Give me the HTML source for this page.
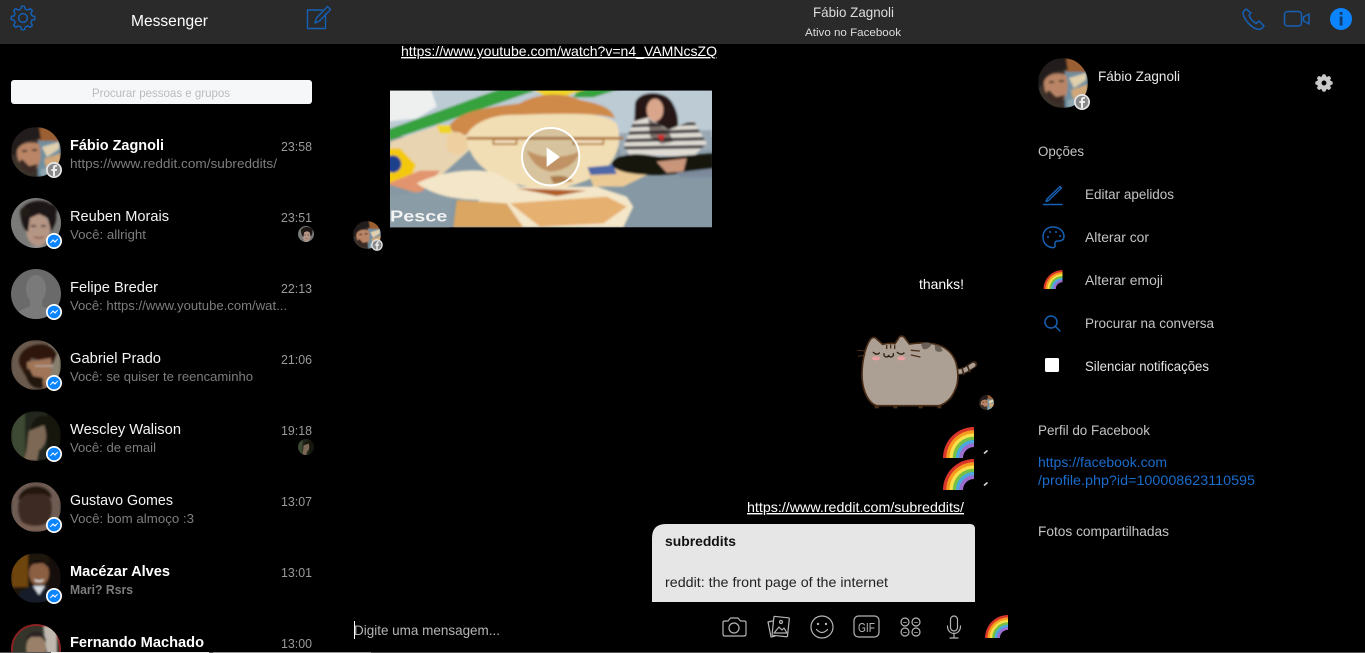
<!DOCTYPE html>
<html lang="pt"><head><meta charset="utf-8"><title>Messenger</title>
<style>
html,body{margin:0;padding:0;background:#000;width:1365px;height:653px;overflow:hidden}
svg{display:block}
text{font-family:"Liberation Sans",sans-serif;font-size:14px;fill:#fff}
.n{font-size:15px;fill:#f4f4f4}
.b{font-size:15px;font-weight:bold;fill:#fff}
.s{font-size:13px;fill:#7d7d7d}
.t{font-size:13px;fill:#9a9a9a}
.o{font-size:13.5px;fill:#c4c4c4}
.l{font-size:13.5px;fill:#1a6ccb}
.i{fill:none;stroke:#1660b4;stroke-width:1.5;stroke-linejoin:round;stroke-linecap:round}
.g{fill:none;stroke:#b5b5b5;stroke-width:1.2;stroke-linejoin:round;stroke-linecap:round}
</style></head><body>
<svg width="1365" height="653" viewBox="0 0 1365 653" xmlns="http://www.w3.org/2000/svg">
<defs>
<clipPath id="c"><circle cx="25" cy="25" r="25"/></clipPath>
<filter id="bl" x="-10%" y="-10%" width="120%" height="120%"><feGaussianBlur stdDeviation="1"/></filter>
<filter id="bv" x="-5%" y="-5%" width="110%" height="110%"><feGaussianBlur stdDeviation="3.5"/></filter>
<clipPath id="vc"><rect x="150" y="152" width="966" height="410"/></clipPath>
<clipPath id="shirt"><path d="M850 320L880 245L925 232L985 270L1060 240L1100 310L1060 350L870 345Z"/></clipPath>

<symbol id="fabio" viewBox="0 0 50 50"><g clip-path="url(#c)"><g filter="url(#bl)"><rect width="50" height="50" fill="#3a302c"/><rect x="27" y="10" width="23" height="40" fill="#6f8fa0"/><path d="M22 0H50V14H28Z" fill="#9a5f30"/><path d="M31 20L48 15V22L36 30Z" fill="#e0d0ae"/><path d="M33 32L50 26V38L36 44Z" fill="#d0a878"/><path d="M30 42L50 38V50H30Z" fill="#90a8b0"/><path d="M0 0H28L30 12L14 14L5 26L0 30Z" fill="#241e1c"/><path d="M6 24C8 16 20 14 28 17C31 26 30 38 24 43C14 47 6 38 6 24Z" fill="#b98566"/><path d="M8 35C11 44 18 47 24 44L27 37L18 39L11 32Z" fill="#3a2c26"/><path d="M11 24H16M21 23H26" stroke="#2c1e18" stroke-width="1.800"/></g></g></symbol>

<symbol id="reuben" viewBox="0 0 50 50"><g clip-path="url(#c)"><rect width="50" height="50" fill="#7a7a78"/><g filter="url(#bl)"><ellipse cx="27" cy="32" rx="12" ry="16" fill="#b59584"/><path d="M18 48H36V50H18Z" fill="#999"/><path d="M10 20C7 8 20 2 30 3C42 3 48 14 44 26L40 34L37 20L28 16L19 20L17 34C13 32 11 26 10 20Z" fill="#1e1815"/><circle cx="14" cy="14" r="5" fill="#231c18"/><circle cx="40" cy="12" r="6" fill="#1e1815"/><path d="M20 28H25M30 28H35" stroke="#2a1c18" stroke-width="1.500"/><path d="M23 39Q28 41 33 39" stroke="#8a5a50" stroke-width="1.500" fill="none"/></g></g></symbol>

<symbol id="felipe" viewBox="0 0 50 50"><g clip-path="url(#c)"><rect width="50" height="50" fill="#6a6a6a"/><ellipse cx="25" cy="20" rx="10" ry="14" fill="#7a7a7a"/><path d="M19 30H31V37L46 44V50H4V44L19 37Z" fill="#7a7a7a"/></g></symbol>

<symbol id="gabriel" viewBox="0 0 50 50"><g clip-path="url(#c)"><g filter="url(#bl)"><rect width="50" height="50" fill="#6a5a4e"/><rect x="38" width="12" height="50" fill="#8a8070"/><path d="M8 24C4 4 40 -4 46 14L42 24L20 18L14 36Z" fill="#2e1510"/><path d="M16 22L40 18C42 30 40 44 28 46C20 46 16 36 16 22Z" fill="#a07458"/><path d="M14 32C16 46 24 50 32 48L32 38L22 36L18 28Z" fill="#24140e"/><path d="M24 26H42" stroke="#cfcfcf" stroke-width=".8"/><path d="M32 44L42 40V50H34Z" fill="#8a6250"/></g></g></symbol>

<symbol id="wescley" viewBox="0 0 50 50"><g clip-path="url(#c)"><g filter="url(#bl)"><rect width="50" height="50" fill="#22281a"/><rect width="14" height="50" fill="#3e4830"/><rect x="36" width="14" height="50" fill="#14140e"/><path d="M20 20C20 4 36 0 42 12L38 24L28 16Z" fill="#17120e"/><path d="M18 20L33 14C37 24 35 36 28 39L26 50L12 50C17 40 16 30 18 20Z" fill="#7c6854"/></g></g></symbol>

<symbol id="gustavo" viewBox="0 0 50 50"><g clip-path="url(#c)"><g filter="url(#bl)"><rect width="50" height="50" fill="#6e5c52"/><ellipse cx="24" cy="26" rx="17" ry="22" fill="#3c2920"/><path d="M7 18C9 0 40 0 41 16L33 12H16Z" fill="#211610"/><path d="M2 50L10 40Q25 48 38 40L46 50Z" fill="#7a6052"/></g></g></symbol>

<symbol id="macezar" viewBox="0 0 50 50"><g clip-path="url(#c)"><g filter="url(#bl)"><rect width="50" height="50" fill="#1f170c"/><rect width="17" height="34" fill="#6e4510"/><rect x="38" width="12" height="50" fill="#14110c"/><ellipse cx="28" cy="20" rx="10" ry="13" fill="#8a5e42"/><path d="M18 15C18 4 38 4 38 15L32 10L22 11Z" fill="#120e0a"/><path d="M23 26Q28 29 33 26L32 28Q28 30 24 28Z" fill="#eee"/><path d="M4 50L10 38L24 32L32 32L44 40L46 50Z" fill="#151c2a"/><path d="M22 33L28 42L34 33Z" fill="#d8dce4"/></g></g></symbol>

<symbol id="fernando" viewBox="0 0 50 50"><g clip-path="url(#c)"><rect width="50" height="50" fill="#8a2222"/><circle cx="25" cy="25" r="23" fill="#34352a"/><g filter="url(#bl)"><path d="M32 2H46V30H36Z" fill="#bfb9b0"/><ellipse cx="25" cy="24" rx="10" ry="14" fill="#9a8068"/><path d="M15 18C15 4 35 4 35 18L30 13H20Z" fill="#2a2420"/></g></g></symbol>

<symbol id="rb" viewBox="0 0 24 24">
<path d="M24 0A24 24 0 0 0 0 24H24Z" fill="#d9352a"/>
<path d="M24 2.500A21.500 21.500 0 0 0 2.500 24H24Z" fill="#f59b1d"/>
<path d="M24 5A19 19 0 0 0 5 24H24Z" fill="#f9e04a"/>
<path d="M24 7.500A16.500 16.500 0 0 0 7.500 24H24Z" fill="#77c043"/>
<path d="M24 10A14 14 0 0 0 10 24H24Z" fill="#49a8de"/>
<path d="M24 12.500A11.500 11.500 0 0 0 12.500 24H24Z" fill="#9a6dce"/>
<path d="M24 15.500A8.500 8.500 0 0 0 15.500 24H24Z" fill="#000"/>
</symbol>

<path id="tooth" d="M-2.2-8.9L-1.6-11.5Q0-12.3 1.6-11.5L2.2-8.9L4.74-7.85"/>
<g id="gear"><use href="#tooth"/><use href="#tooth" transform="rotate(45)"/><use href="#tooth" transform="rotate(90)"/><use href="#tooth" transform="rotate(135)"/><use href="#tooth" transform="rotate(180)"/><use href="#tooth" transform="rotate(225)"/><use href="#tooth" transform="rotate(270)"/><use href="#tooth" transform="rotate(315)"/><circle r="4.4"/></g>

<g id="ms"><circle r="8" fill="#fff"/><circle r="6.3" fill="#0a84ff"/><path d="M-3.800 2L-1 -1.300L.9 .5L3.800 -2L1 1.300L-.9 -.5Z" fill="#fff" stroke="#fff" stroke-width=".7"/></g>
<g id="fb"><circle r="8" fill="#e8e8e8"/><circle r="6.3" fill="#8a8a8a"/><path d="M1 6V1H2.8L3 -1H1V-2.2C1 -3 1.4 -3.3 2.1 -3.3H3V-5H1.7C-.2 -5 -1 -4 -1 -2.4V-1H-2.6V1H-1V6Z" fill="#eee"/></g>
</defs>

<rect width="1365" height="653" fill="#000"/>
<rect width="1365" height="44" fill="#2a2a2a"/>

<!-- header -->
<use href="#gear" transform="translate(23 18)" fill="none" stroke="#1660b4" stroke-width="1.5"/>
<text x="131" y="26" style="font-size:16px" textLength="77" lengthAdjust="spacingAndGlyphs">Messenger</text>
<g class="i"><path d="M322 10H307.5V28.5H325.5V14" style="stroke-width:1.4"/><path d="M315 23L316.5 18L327.5 6.5L330.5 9.5L319.5 21Z" style="stroke-width:1.4"/></g>
<text x="813" y="17" style="font-size:14px;fill:#ddd" textLength="81" lengthAdjust="spacingAndGlyphs">Fábio Zagnoli</text>
<text x="805" y="36" style="font-size:11px;fill:#ddd" textLength="96" lengthAdjust="spacingAndGlyphs">Ativo no Facebook</text>
<path class="i" d="M1246 9L1243 12C1243 19 1252 29 1259 29.5Q1262 29 1264 26L1259 21L1256 23.5C1252 21 1250 18 1249 15L1251 13Z"/>
<rect class="i" x="1284.5" y="11.5" width="17" height="14.5" rx="3"/>
<path class="i" d="M1303.500 17L1309 14V24L1303.500 21Z"/>
<circle cx="1341" cy="19" r="11" fill="#0a84ff"/>
<rect x="1339.700" y="16.500" width="2.800" height="9" fill="#123a66"/><rect x="1339.700" y="12" width="2.800" height="2.800" fill="#123a66"/>

<!-- search -->
<rect x="11" y="80" width="301" height="24" rx="3" fill="#f6f7f9"/>
<text x="92" y="97" style="font-size:12px;fill:#bbb" textLength="138" lengthAdjust="spacingAndGlyphs">Procurar pessoas e grupos</text>

<!-- list -->
<use href="#fabio" x="11" y="127" width="50" height="50"/><use href="#fb" transform="translate(54 170)"/>
<text class="b" x="70" y="150" textLength="94" lengthAdjust="spacingAndGlyphs">Fábio Zagnoli</text>
<text class="s" x="70" y="168" textLength="207" lengthAdjust="spacingAndGlyphs">https://www.reddit.com/subreddits/</text>
<text class="t" x="281" y="151" textLength="31" lengthAdjust="spacingAndGlyphs">23:58</text>

<use href="#reuben" x="11" y="198" width="50" height="50"/><use href="#ms" transform="translate(54 241)"/>
<text class="n" x="70" y="221" textLength="99" lengthAdjust="spacingAndGlyphs">Reuben Morais</text>
<text class="s" x="70" y="239" textLength="76" lengthAdjust="spacingAndGlyphs">Você: allright</text>
<text class="t" x="281" y="222" textLength="31" lengthAdjust="spacingAndGlyphs">23:51</text>
<use href="#reuben" x="298" y="226" width="16" height="16"/>

<use href="#felipe" x="11" y="269" width="50" height="50"/><use href="#ms" transform="translate(54 312)"/>
<text class="n" x="70" y="292" textLength="88" lengthAdjust="spacingAndGlyphs">Felipe Breder</text>
<text class="s" x="70" y="310" textLength="217" lengthAdjust="spacingAndGlyphs">Você: https://www.youtube.com/wat...</text>
<text class="t" x="281" y="293" textLength="31" lengthAdjust="spacingAndGlyphs">22:13</text>

<use href="#gabriel" x="11" y="340" width="50" height="50"/><use href="#ms" transform="translate(54 383)"/>
<text class="n" x="70" y="363" textLength="91" lengthAdjust="spacingAndGlyphs">Gabriel Prado</text>
<text class="s" x="70" y="381" textLength="183" lengthAdjust="spacingAndGlyphs">Você: se quiser te reencaminho</text>
<text class="t" x="281" y="364" textLength="31" lengthAdjust="spacingAndGlyphs">21:06</text>

<use href="#wescley" x="11" y="411" width="50" height="50"/><use href="#ms" transform="translate(54 454)"/>
<text class="n" x="70" y="434" textLength="111" lengthAdjust="spacingAndGlyphs">Wescley Walison</text>
<text class="s" x="70" y="452" textLength="86" lengthAdjust="spacingAndGlyphs">Você: de email</text>
<text class="t" x="281" y="435" textLength="31" lengthAdjust="spacingAndGlyphs">19:18</text>
<use href="#wescley" x="298" y="439" width="16" height="16"/>

<use href="#gustavo" x="11" y="482" width="50" height="50"/><use href="#ms" transform="translate(54 525)"/>
<text class="n" x="70" y="505" textLength="103" lengthAdjust="spacingAndGlyphs">Gustavo Gomes</text>
<text class="s" x="70" y="523" textLength="124" lengthAdjust="spacingAndGlyphs">Você: bom almoço :3</text>
<text class="t" x="281" y="506" textLength="31" lengthAdjust="spacingAndGlyphs">13:07</text>

<use href="#macezar" x="11" y="553" width="50" height="50"/><use href="#ms" transform="translate(54 596)"/>
<text class="b" x="70" y="576" textLength="100" lengthAdjust="spacingAndGlyphs">Macézar Alves</text>
<text class="s" x="70" y="594" style="font-weight:bold" textLength="63" lengthAdjust="spacingAndGlyphs">Mari? Rsrs</text>
<text class="t" x="281" y="577" textLength="31" lengthAdjust="spacingAndGlyphs">13:01</text>

<use href="#fernando" x="11" y="624" width="50" height="50"/>
<text class="b" x="70" y="647" textLength="134" lengthAdjust="spacingAndGlyphs">Fernando Machado</text>
<text class="t" x="281" y="648" textLength="31" lengthAdjust="spacingAndGlyphs">13:00</text>

<!-- conversation -->
<text x="401" y="56" text-decoration="underline" textLength="316" lengthAdjust="spacingAndGlyphs">https://www.youtube.com/watch?v=n4_VAMNcsZQ</text>

<g transform="translate(340 40) scale(.33333)"><g clip-path="url(#vc)">
<rect x="150" y="152" width="966" height="410" fill="#8698a4"/>
<g filter="url(#bv)">
<rect x="140" y="140" width="990" height="150" fill="#bccbd4"/>
<path d="M140 140H270L290 200L230 235L140 245Z" fill="#eef0f0"/>
<path d="M820 280L1116 270V330L850 360Z" fill="#9aa8b4"/>
<path d="M140 270L500 140H620L300 250L150 300Z" fill="#36a23e"/>
<path d="M720 140H860L760 172L700 172Z" fill="#36a23e"/>
<path d="M560 140H760L640 180Z" fill="#f0d428"/>
<path d="M150 305L300 255L330 265L400 320L300 410L140 420Z" fill="#e8d4b0"/>
<path d="M290 255L330 255L335 280L300 280Z" fill="#f0d428"/>
<path d="M140 325H180L228 375L205 430H140Z" fill="#f4c90e"/>
<circle cx="158" cy="372" r="26" fill="#1b3f8c"/>
<path d="M140 432L240 392L300 392L240 462L140 432Z" fill="#e2946e"/>
<path d="M140 470L340 440L330 570H140Z" fill="#8a9ca6"/>
<path d="M380 230C450 200 780 200 830 250C860 340 800 425 650 445C520 450 410 400 385 320C370 290 370 250 380 230Z" fill="#f2deb4"/>
<path d="M330 255C360 210 460 200 540 190C580 165 660 150 720 180C770 190 815 200 825 235C760 215 640 222 500 225C440 230 395 255 380 285C350 285 330 275 330 255Z" fill="#cf8a48"/>
<ellipse cx="350" cy="310" rx="32" ry="34" fill="#eed0a0"/>
<path d="M380 295H850" stroke="#b07434" stroke-width="8"/>
<path d="M460 298H530V312H460ZM700 298H790V312H700Z" fill="#f6e4c2" stroke="#b07434" stroke-width="5"/>
<path d="M560 330Q630 370 720 335Q700 390 630 395Q580 385 560 330Z" fill="#d8a470"/>
<path d="M230 430C300 395 400 380 470 400L540 440L770 440L860 470L880 500L850 562H340L360 510L420 480C350 480 280 465 230 430Z" fill="#f4e6c8"/>
<path d="M350 480L500 490L550 562H340Z" fill="#dba662"/>
<path d="M530 445L740 452L650 468Z" fill="#b05c20"/>
<path d="M510 490L800 470L860 500L790 550L600 560Z" fill="#e6b070"/>
<path d="M630 410Q680 400 700 425L640 430Z" fill="#c08a54"/>
<path d="M745 400L860 380L930 400L850 440L760 440Z" fill="#ecca96"/>
<path d="M742 382L820 375L830 402L752 405Z" fill="#4f68a8"/>
<path d="M885 190C895 150 975 150 995 185C1020 225 1020 265 1000 305L965 310L920 300L882 260Z" fill="#251612"/>
<ellipse cx="945" cy="210" rx="25" ry="34" fill="#d9a68c"/>
<path d="M850 320L880 245L925 232L985 270L1060 240L1100 310L1060 350L870 345Z" fill="#e0dcd5"/>
<g clip-path="url(#shirt)"><path d="M850 258L1095 250M850 280L1095 272M850 302L1095 296M850 324L1095 320" stroke="#3a3a3e" stroke-width="10"/></g>
<path d="M925 235L985 272L1000 305L965 312L930 290Z" fill="#251612" opacity=".55"/>
<path d="M950 285L975 285L965 305Z" fill="#d02a2a"/>
<path d="M815 370C830 340 900 335 960 352L1120 340V400L1060 398L960 405C900 405 820 400 815 370Z" fill="#14140f"/>
<path d="M950 365L1040 355L1030 395L980 398Z" fill="#c9967c"/>
<path d="M1010 398L1120 385V412L1020 412Z" fill="#7d8a9c"/>
</g>
<circle cx="632" cy="350" r="86" fill="#3a2a1a" fill-opacity=".14" stroke="#fff" stroke-width="6"/>
<path d="M620 322L660 351L620 381Z" fill="#fff"/>
<text x="150" y="544" style="font-size:46px;font-weight:bold;fill:#f2f2f2" textLength="172" lengthAdjust="spacingAndGlyphs">Pesce</text>
</g></g>

<use href="#fabio" x="353" y="221" width="28" height="28"/>
<g transform="translate(377 245) scale(.72)"><use href="#fb"/></g>

<text x="919" y="289" textLength="45" lengthAdjust="spacingAndGlyphs">thanks!</text>

<!-- pusheen -->
<g transform="translate(840 325) scale(.33333)">
<path d="M355 140C375 140 390 125 402 118" fill="none" stroke="#3f2a1a" stroke-width="20" stroke-linecap="round"/>
<path d="M355 140C375 140 390 125 400 120" fill="none" stroke="#ab9f93" stroke-width="13" stroke-linecap="round"/>
<path d="M366 128L372 150M382 122L390 142" stroke="#3f2a1a" stroke-width="5"/>
<path d="M66 150C66 110 75 65 92 42Q100 34 108 40L128 58Q150 53 165 56L178 36Q186 30 193 37L208 57C260 50 320 50 345 105C355 130 358 170 345 195C335 220 318 235 298 242H110C85 235 66 195 66 150Z" fill="#ac9f93" stroke="#4a2e18" stroke-width="5"/>
<path d="M244 55Q270 48 274 60Q262 76 250 72Q244 66 244 55ZM284 60Q302 58 308 78Q294 84 286 76Z" fill="#6b6058"/>
<path d="M152 58V70M140 60V72M164 60V72" stroke="#4a2e18" stroke-width="4"/>
<path d="M100 82Q110 92 118 84M172 82Q184 92 192 84M132 86V92Q140 100 146 92Q152 100 160 92V86" fill="none" stroke="#2e1e12" stroke-width="4" stroke-linecap="round"/>
<path d="M214 76L238 78M214 90L240 96" stroke="#4a2e18" stroke-width="4" stroke-linecap="round"/>
<path d="M52 76L78 78M54 94L76 90" stroke="#4a2e18" stroke-width="3"/>
<ellipse cx="108" cy="100" rx="12" ry="6" fill="#eaa0a0"/><ellipse cx="184" cy="100" rx="12" ry="6" fill="#eaa0a0"/>
<path d="M104 242H116V250H104ZM160 242H172V250H160ZM236 242H248V250H236ZM292 242H304V250H292Z" fill="#4a2e18"/>
</g>
<use href="#fabio" x="979" y="395" width="15" height="15"/>

<use href="#rb" x="943" y="427" width="31" height="31"/>
<use href="#rb" x="943" y="459" width="31" height="31"/>
<path d="M984 453.500L987.500 450.500" stroke="#ccc" stroke-width="1.800"/>
<path d="M984 485.500L987.500 482.500" stroke="#ccc" stroke-width="1.800"/>

<text x="747" y="512" text-decoration="underline" textLength="217" lengthAdjust="spacingAndGlyphs">https://www.reddit.com/subreddits/</text>
<path d="M652 602V538Q652 524 666 524H970Q975 524 975 529V602Z" fill="#e6e6e6"/>
<text x="665" y="546" style="font-weight:bold;fill:#111" textLength="71" lengthAdjust="spacingAndGlyphs">subreddits</text>
<text x="665" y="587" style="fill:#222" textLength="223" lengthAdjust="spacingAndGlyphs">reddit: the front page of the internet</text>

<!-- composer -->
<text x="354" y="635" style="fill:#b5b5b5" textLength="146" lengthAdjust="spacingAndGlyphs">Digite uma mensagem...</text>
<rect x="354" y="621" width="1" height="18" fill="#fff"/>

<g class="g">
<path d="M723 622.500Q723 621 725 621H728L730.500 618H738L740.500 621H744Q746 621 746 622.500V634Q746 636 744 636H725Q723 636 723 634Z"/><circle cx="734" cy="628" r="5"/>
<path d="M772.500 621L768 622L771 637L775 636"/><rect x="773" y="617" width="15.500" height="19" rx="1" transform="rotate(6 780 626)"/><path d="M774 633L779 627L782 630L784 628L787 633Z"/><circle cx="781" cy="622" r="1.500"/>
<circle cx="822" cy="627" r="11"/><circle cx="818" cy="624" r=".6"/><circle cx="826" cy="624" r=".6"/><path d="M816.500 629.500Q822 635.500 827.500 629.500"/>
<rect x="854" y="616" width="25" height="21" rx="4.500"/>
<circle cx="905" cy="622" r="4"/><circle cx="916" cy="622" r="4"/><circle cx="905" cy="632" r="4"/><circle cx="916" cy="632" r="4"/>
<path d="M903.500 622.500H906.500M914.500 622.500H917.500M903.500 632.500H906.500M914.500 632.500H917.500" style="stroke-width:.8"/>
<rect x="950.500" y="616" width="7" height="15" rx="3.500"/><path d="M947.500 626C947.500 636 960.500 636 960.500 626M954 633V637.500M950 638H958"/>
</g>
<text x="858" y="632" style="font-size:12.500px;fill:#b5b5b5" textLength="17" lengthAdjust="spacingAndGlyphs">GIF</text>
<use href="#rb" x="985" y="615" width="23" height="23"/>

<!-- right panel -->
<use href="#fabio" x="1038" y="58" width="50" height="50"/><use href="#fb" transform="translate(1082 102)"/>
<text x="1098" y="81" style="font-size:14px;fill:#e8e8e8" textLength="82" lengthAdjust="spacingAndGlyphs">Fábio Zagnoli</text>
<g transform="translate(1324 83) scale(.68)"><g fill="#c9c9c9" stroke="#c9c9c9" stroke-width="2"><circle r="9"/><use href="#gear"/></g><circle r="3.600" fill="#000"/></g>

<text class="o" x="1038" y="156" textLength="46" lengthAdjust="spacingAndGlyphs">Opções</text>

<path class="i" d="M1047 199L1060 186.500L1061.500 188L1048.500 200.500L1046 201.500Z M1043.500 204.500H1062"/>
<text class="o" x="1085" y="199" textLength="89" lengthAdjust="spacingAndGlyphs">Editar apelidos</text>

<path class="i" d="M1053 227C1059 227 1064 231 1064 236.500C1064 240 1061 241 1058 241C1055 241 1054.500 243 1055 245C1055.500 247 1054 248 1052 247.500C1047 247 1043 243 1043 237C1043 231 1047 227 1053 227Z"/>
<circle cx="1048" cy="237" r="1" fill="#1660b4"/><circle cx="1050" cy="232" r="1" fill="#1660b4"/><circle cx="1056" cy="232" r="1" fill="#1660b4"/><circle cx="1060" cy="236" r="1" fill="#1660b4"/>
<text class="o" x="1085" y="242" textLength="64" lengthAdjust="spacingAndGlyphs">Alterar cor</text>

<use href="#rb" x="1043" y="270" width="20" height="19"/>
<text class="o" x="1085" y="285" textLength="78" lengthAdjust="spacingAndGlyphs">Alterar emoji</text>

<circle class="i" cx="1051" cy="322" r="6"/><path class="i" d="M1055.500 326.500L1060 331"/>
<text class="o" x="1085" y="328" textLength="129" lengthAdjust="spacingAndGlyphs">Procurar na conversa</text>

<rect x="1045" y="358" width="14" height="14" rx="1.500" fill="#fff"/>
<text class="o" x="1085" y="371" style="fill:#e4e4e4" textLength="124" lengthAdjust="spacingAndGlyphs">Silenciar notificações</text>

<text class="o" x="1038" y="435" textLength="112" lengthAdjust="spacingAndGlyphs">Perfil do Facebook</text>
<text class="l" x="1038" y="467" textLength="129" lengthAdjust="spacingAndGlyphs">https://facebook.com</text>
<text class="l" x="1038" y="485" textLength="217" lengthAdjust="spacingAndGlyphs">/profile.php?id=100008623110595</text>
<text class="o" x="1038" y="536" textLength="131" lengthAdjust="spacingAndGlyphs">Fotos compartilhadas</text>

<!-- bottom edge -->
<rect y="652" width="1365" height="1" fill="#555"/>
<rect x="51" y="652" width="158" height="1" fill="#eee"/>
<rect x="213" y="652" width="158" height="1" fill="#999"/>
</svg>
</body></html>
